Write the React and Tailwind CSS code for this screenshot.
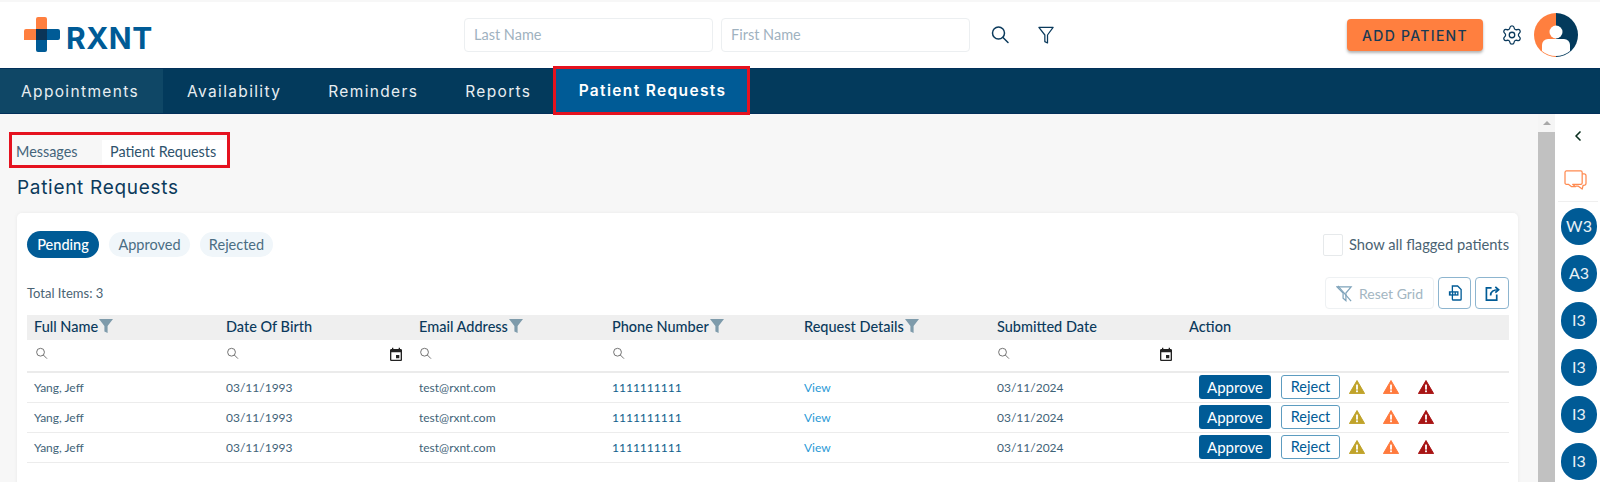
import React from "react";
import { Settings, ChevronLeft } from "lucide-react";
import { MdEvent } from "react-icons/md";

const body = { fontFamily: '"Lato", "Noto Sans", sans-serif' };

const Search = ({ className, w = 1.5 }) => (
  <svg viewBox="0 0 20 20" fill="none" stroke="currentColor" strokeWidth={w} className={className}>
    <circle cx="8.5" cy="8" r="6" />
    <path d="M13 12.5l5 5" strokeLinecap="round" />
  </svg>
);
const SolidFunnel = () => (
  <svg viewBox="0 0 14 14" className="w-[14px] h-[14px] fill-[#7e9bab] shrink-0 -mt-[2px]">
    <path d="M0 0h14L8.6 7v7L5.4 12.5V7z" />
  </svg>
);
const Warn = ({ className }) => (
  <svg viewBox="0 0 16 14" className={`w-[16px] h-[14px] ${className}`}>
    <path d="M8 0.5L15.6 13.6H0.4z" fill="currentColor" stroke="currentColor" strokeLinejoin="round" />
    <rect x="7.1" y="4.6" width="1.8" height="5" fill="#fff" />
    <rect x="7.1" y="10.4" width="1.8" height="1.8" fill="#fff" />
  </svg>
);

const cols = ["Full Name", "Date Of Birth", "Email Address", "Phone Number", "Request Details", "Submitted Date", "Action"];
const filtered = [true, false, true, true, true, false, false];
const tabs = ["Availability", "Reminders", "Reports"];

function Row() {
  return (
    <div className="grid grid-cols-[189px_193px_193px_192px_193px_192px_1fr] h-[30px] items-center border-b border-[#ececec] text-[12px] text-[#3f6378]">
      <div className="pl-[7px]">Yang, Jeff</div>
      <div className="pl-[10px]">03/11/1993</div>
      <div className="pl-[10px]">test@rxnt.com</div>
      <div className="pl-[10px] text-[#0f5e8c]">1111111111</div>
      <div className="pl-[10px] text-[#2a9ad6]">View</div>
      <div className="pl-[10px]">03/11/2024</div>
      <div className="pl-[20px] flex items-center -mt-[1px]">
        <button className="w-[72px] h-[24px] rounded-[3px] bg-[#005b96] text-white text-[15px]">Approve</button>
        <button className="w-[59px] h-[24px] ml-[10px] rounded-[3px] border border-[#5d9cc0] bg-white text-[#005b96] text-[14.5px]">Reject</button>
        <Warn className="ml-[9px] text-[#c0a32a]" />
        <Warn className="ml-[18px] text-[#ff7a3d]" />
        <Warn className="ml-[19px] text-[#a81414]" />
      </div>
    </div>
  );
}

export default function App() {
  return (
    <div className="w-[1600px] h-[482px] overflow-hidden flex flex-col bg-white" style={body}>
      <div className="h-[2px] bg-[#f7f7f7]" />
      {/* Header */}
      <header className="h-[66px] flex items-center relative bg-white">
        <svg viewBox="0 0 36 35" className="w-[36px] h-[35px] ml-[24px] -mt-[1px] shrink-0">
          <path d="M12 2a2 2 0 012-2h7a2 2 0 012 2v21H12V23H0V14a2 2 0 012-2h10z" fill="#ff7f3f" />
          <path d="M12 12h22a2 2 0 012 2v7a2 2 0 01-2 2H23v10a2 2 0 01-2 2h-7a2 2 0 01-2-2z" fill="#005b96" />
          <rect x="12" y="12" width="11" height="11" fill="#0b3557" />
        </svg>
        <span className="w-[86px] ml-[6px] mt-[5px] text-[30px] leading-none font-bold text-[#005b96] tracking-[0.5px]" style={{ fontFamily: '"Inter", sans-serif' }}>RXNT</span>
        <div className="ml-[312px] flex gap-[8px]">
          <div className="w-[249px] h-[34px] rounded-[4px] border border-[#eceff1] flex items-center pl-[9px] text-[14.5px] text-[#9fb2bf]">Last Name</div>
          <div className="w-[249px] h-[34px] rounded-[4px] border border-[#eceff1] flex items-center pl-[9px] text-[14.5px] text-[#9fb2bf]">First Name</div>
        </div>
        <Search className="w-[20px] h-[20px] ml-[20px] text-[#0b3a5c]" />
        <svg viewBox="0 0 18 20" fill="none" stroke="#0b3a5c" strokeWidth="1.4" strokeLinejoin="round" className="w-[16px] h-[20px] ml-[28px]">
          <path d="M1 1.5h16l-6.3 8.5v9L7.7 17.5V10z" />
        </svg>
        <button className="ml-[293px] w-[136px] h-[32px] rounded-[4px] bg-[#ff7f3f] shadow-[0_2px_3px_rgba(0,0,0,0.3)] text-[#173a55] text-[14px] tracking-[1.3px] font-medium" style={{ fontFamily: '"Inter", sans-serif' }}>ADD PATIENT</button>
        <Settings className="w-[22px] h-[22px] ml-[18px] text-[#0b3a5c]" strokeWidth={1.4} />
        <svg viewBox="0 0 44 44" className="w-[44px] h-[44px] ml-[11px] shrink-0">
          <path d="M22 0a22 22 0 000 44z" fill="#ff7f3f" />
          <path d="M22 0a22 22 0 010 44z" fill="#033a5c" />
          <circle cx="22" cy="19" r="6.5" fill="#fff" />
          <path d="M8 38v-6a6 6 0 016-6h16a6 6 0 016 6v6a22 22 0 01-28 0z" fill="#fff" />
        </svg>
      </header>
      {/* Nav */}
      <nav className="h-[46px] bg-[#033a5c] flex items-stretch text-[15.5px] tracking-[1.35px] text-[#e8eef2] relative border-y border-[#02305a] pt-[1px]" style={{ fontFamily: '"Inter", sans-serif' }}>
        <div className="w-[163px] bg-[#0f4766] flex items-center pl-[21px] -mt-[1px] pt-[1px]">Appointments</div>
        <div className="flex items-center pl-[24px] gap-[47px]">
          {tabs.map((t) => (
            <span key={t}>{t}</span>
          ))}
        </div>
        <div className="absolute left-[553px] -top-[3px] w-[197px] h-[49px] bg-[#005b96] border-[3px] border-[#e5121f] flex items-center justify-center font-semibold text-white pl-[2px]">Patient Requests</div>
      </nav>
      {/* Main */}
      <div className="flex-1 flex min-h-0">
        <main className="w-[1538px] bg-[#f7f7f7] overflow-hidden">
          <div className="ml-[9px] mt-[18px] w-[221px] h-[36px] border-[3px] border-[#e5121f] flex items-end pb-[1px] text-[14.4px] text-[#44647a]">
            <span className="w-[90px] pl-[4px] h-[24px] flex items-center">Messages</span>
            <span className="h-[24px] flex-1 bg-white flex items-center pl-[8px] text-[#2f536c]">Patient Requests</span>
          </div>
          <h1 className="ml-[17px] mt-[7px] text-[19px] leading-[26px] tracking-[0.7px] text-[#0b3a5c]" style={{ fontFamily: '"Inter", sans-serif' }}>Patient Requests</h1>
          <section className="ml-[17px] mt-[12px] w-[1501px] h-[300px] bg-white rounded-[5px] shadow-[0_0_4px_rgba(0,0,0,0.06)] pl-[10px] pr-[9px] pt-[18px]">
            <div className="flex items-center h-[27px] text-[14.5px]">
              <span className="w-[72px] h-[27px] rounded-full bg-[#005b96] text-white flex items-center justify-center font-medium">Pending</span>
              <span className="ml-[10px] w-[81px] h-[25px] rounded-full bg-[#f0f6fa] text-[#4a6d83] flex items-center justify-center">Approved</span>
              <span className="ml-[10px] w-[73px] h-[25px] rounded-full bg-[#f0f6fa] text-[#4a6d83] flex items-center justify-center">Rejected</span>
              <span className="ml-auto w-[20px] h-[22px] rounded-[2px] border border-[#e6e9eb] bg-white" />
              <span className="ml-[6px] text-[#4a6373] text-[14.7px]">Show all flagged patients</span>
            </div>
            <div className="flex items-center mt-[19px] h-[32px]">
              <span className="text-[13px] text-[#4a6373] mt-[2px]">Total Items: 3</span>
              <div className="ml-auto flex h-[32px] gap-[4px]">
                <div className="w-[109px] rounded-[4px] border border-[#eef1f3] flex items-center justify-center gap-[6px] text-[14px] text-[#a3b6c2]">
                  <svg viewBox="0 0 18 18" fill="none" stroke="#7ea3ba" strokeWidth="1.3" className="w-[17px] h-[17px]">
                    <path d="M1 2h15l-5.5 6.5v8L7.5 14V8.5z" />
                    <path d="M2 1l14 16" />
                  </svg>
                  Reset Grid
                </div>
                <div className="w-[33px] rounded-[4px] border border-[#8db5cf] flex items-center justify-center">
                  <svg viewBox="0 0 16 18" className="w-[14px] h-[16px]">
                    <path d="M5 1h6l4 4v11a1 1 0 01-1 1H6a1 1 0 01-1-1z" fill="none" stroke="#005b96" strokeWidth="1.5" />
                    <rect x="1" y="7" width="11" height="5" fill="#005b96" />
                    <rect x="3" y="8.5" width="1.5" height="2" fill="#fff" />
                    <rect x="6" y="8.5" width="1.5" height="2" fill="#fff" />
                    <rect x="9" y="8.5" width="1.5" height="2" fill="#fff" />
                  </svg>
                </div>
                <div className="w-[34px] rounded-[4px] border border-[#8db5cf] flex items-center justify-center">
                  <svg viewBox="0 0 16 16" fill="none" stroke="#005b96" strokeWidth="1.8" className="w-[15px] h-[15px]">
                    <path d="M7 2H1.5v13h11V9" />
                    <path d="M6 10c0-4 3-6 8-6" />
                    <path d="M11 1l3.5 3L11 7" />
                  </svg>
                </div>
              </div>
            </div>
            <div className="mt-[6px] w-[1482px] h-[200px]">
              <div className="grid grid-cols-[189px_193px_193px_192px_193px_192px_1fr] h-[25px] bg-[#efefef] items-center text-[14.5px] font-medium text-[#0b3a5c]">
                {cols.map((c, i) => (
                  <div key={c} className={`flex items-center gap-[1px] -mt-[1px] ${i === 0 ? "pl-[7px]" : "pl-[10px]"}`}>
                    {c}
                    {filtered[i] && <SolidFunnel />}
                  </div>
                ))}
              </div>
              <div className="grid grid-cols-[189px_193px_193px_192px_193px_192px_1fr] h-[33px] items-start pt-[7px] border-b-2 border-[#ebebeb] text-[#6f6f6f]">
                <div className="pl-[8px]"><Search className="w-[13px] h-[13px]" /></div>
                <div className="pl-[10px] pr-[10px] flex justify-between items-start"><Search className="w-[13px] h-[13px]" /><MdEvent className="w-[16px] h-[16px] text-[#222] -mr-[5px]" /></div>
                <div className="pl-[10px]"><Search className="w-[13px] h-[13px]" /></div>
                <div className="pl-[10px]"><Search className="w-[13px] h-[13px]" /></div>
                <div />
                <div className="pl-[10px] pr-[10px] flex justify-between items-start"><Search className="w-[13px] h-[13px]" /><MdEvent className="w-[16px] h-[16px] text-[#222] -mr-[5px]" /></div>
                <div />
              </div>
              <Row />
              <Row />
              <Row />
            </div>
          </section>
        </main>
        {/* Scrollbar */}
        <div className="w-[17px] bg-[#f5f5f5] flex flex-col shrink-0">
          <div className="h-[18px] flex items-center justify-center">
            <span className="w-0 h-0 border-x-[4px] border-x-transparent border-b-[4px] border-b-[#a8a8a8]" />
          </div>
          <div className="flex-1 bg-[#c1c1c1]" />
        </div>
        {/* Side rail */}
        <aside className="flex-1 bg-white flex flex-col items-center overflow-hidden relative">
          <ChevronLeft className="w-[16px] h-[16px] mt-[14px] text-[#0a2f1f] ml-[1px]" strokeWidth={2.5} />
          <svg viewBox="0 0 24 22" fill="none" stroke="#ff8a50" strokeWidth="1.3" strokeLinejoin="round" className="w-[23px] h-[21px] mt-[26px] -ml-[5px]">
            <path d="M2.5 1h15a1.5 1.5 0 011.5 1.5v11a1.5 1.5 0 01-1.5 1.5H9l3 2.5H8L4.5 15h-2A1.5 1.5 0 011 13.5v-11A1.5 1.5 0 012.5 1z" />
            <path d="M19 4h2a2 2 0 012 2v8a2 2 0 01-2 2h-1l-1 4-4-3H12" />
          </svg>
          <div className="w-[40px] h-px bg-[#efefef] mt-[10px]" />
          <div className="flex flex-col gap-[10.5px] mt-[6px] ml-[3px] text-[#e9f1f6] text-[16px]">
            {["W3", "A3", "I3", "I3", "I3", "I3"].map((t, i) => (
              <div key={i} className="w-[36px] h-[36.5px] rounded-full bg-[#005b96] flex items-center justify-center shrink-0">{t}</div>
            ))}
          </div>
        </aside>
      </div>
    </div>
  );
}
